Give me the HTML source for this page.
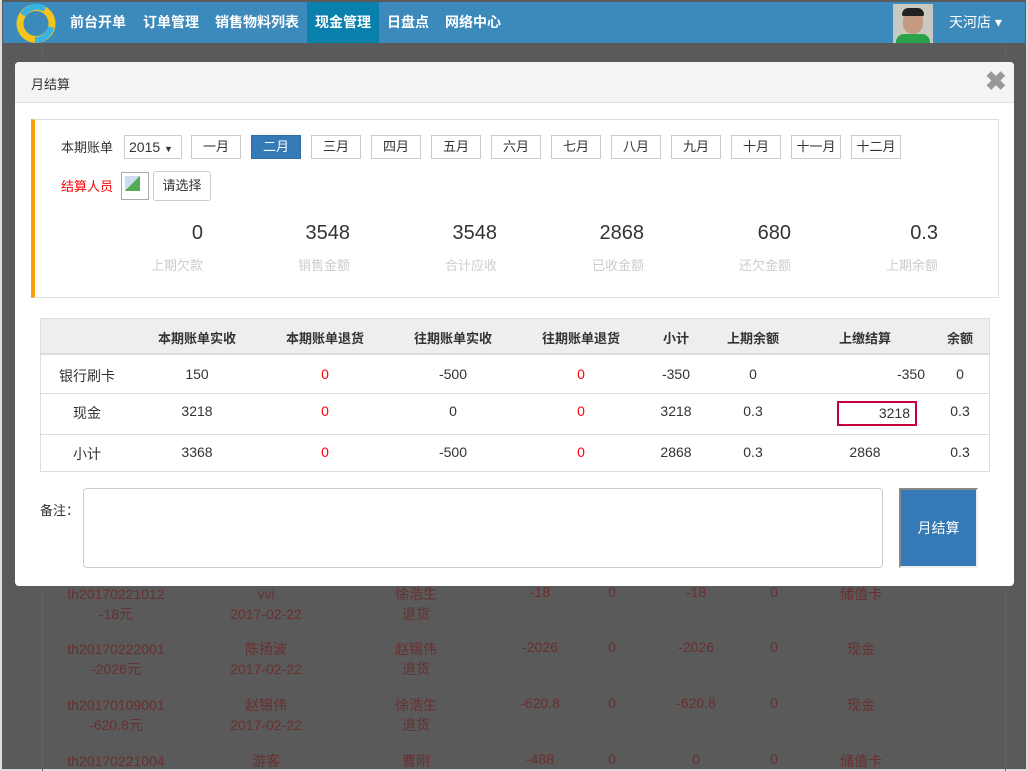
<!DOCTYPE html>
<html><head><meta charset="utf-8"><style>
*{box-sizing:border-box;margin:0;padding:0}
body{width:1028px;height:771px;overflow:hidden;background:#5a5a5a;font-family:"Liberation Sans","Noto Sans CJK SC",sans-serif;font-size:14px;color:#333;position:relative}
.a{position:absolute}
.nav{left:3px;top:2px;width:1022px;height:41px;background:#3c89bb}
.nav span{position:absolute;top:0;height:41px;line-height:40px;color:#fff;font-size:14px;font-weight:bold}
.bgt{color:#6a2f2f;font-size:14px;text-align:center;width:140px;margin-left:-70px}
.modal{left:15px;top:62px;width:999px;height:524px;background:#fff;border-radius:4px;overflow:hidden}
.mh{left:0;top:0;width:999px;height:41px;background:#f4f4f4;border-bottom:1px solid #e0e0e0}
.mb{height:24px;width:50px;border:1px solid #ccc;text-align:center;line-height:22px;font-size:13px;background:#fff}
.num{font-size:20px;color:#333;text-align:right;width:120px}
.lbl{font-size:13px;color:#ccc;text-align:right;width:120px}
.c{text-align:center;width:120px;margin-left:-60px}
.red{color:#f00}
.th{font-weight:bold;font-size:13px}
.hl{height:1px;background:#ddd}
</style></head><body>
<div class="a" style="left:0;top:0;width:1028px;height:771px;border:2px solid #ddd;border-top:none"></div>
<div class="a nav">
<svg class="a" style="left:12px;top:1px" width="42" height="41" viewBox="0 0 42 41"><circle cx="21" cy="20.5" r="16" fill="none" stroke="#f3c51c" stroke-width="7"/><path d="M8 12 A16 16 0 0 1 30 6" stroke="#39b3e6" stroke-width="6" fill="none"/><path d="M36 24 A16 16 0 0 1 20 37" stroke="#39b3e6" stroke-width="6" fill="none"/><circle cx="21" cy="20.5" r="11" fill="#3c89bb"/></svg>
<span style="left:67px">前台开单</span><span style="left:140px">订单管理</span><span style="left:212px">销售物料列表</span>
<span style="left:304px;width:72px;background:#0a80ad;padding-left:8px">现金管理</span>
<span style="left:384px">日盘点</span><span style="left:442px">网络中心</span>
<div class="a" style="left:890px;top:2px;width:40px;height:39px;background:#c9c9c2"><div class="a" style="left:10px;top:6px;width:20px;height:24px;border-radius:10px;background:#c49a80"></div><div class="a" style="left:3px;top:30px;width:34px;height:9px;background:#29a24a;border-radius:8px 8px 0 0"></div><div class="a" style="left:9px;top:4px;width:22px;height:8px;background:#222;border-radius:8px 8px 2px 2px"></div></div>
<span style="left:946px;font-weight:normal">天河店 ▾</span>
</div>
<div class="a" style="left:42px;top:43px;width:964px;height:728px;border-left:1px solid #626262;border-right:1px solid #626262"></div>
<div class="a bgt" style="left:116px;top:584px;line-height:20px">th20170221012<br>-18元</div>
<div class="a bgt" style="left:266px;top:584px;line-height:20px">vvi<br>2017-02-22</div>
<div class="a bgt" style="left:416px;top:584px;line-height:20px">徐浩生<br>退货</div>
<div class="a bgt" style="left:116px;top:639px;line-height:20px">th20170222001<br>-2026元</div>
<div class="a bgt" style="left:266px;top:639px;line-height:20px">陈扬波<br>2017-02-22</div>
<div class="a bgt" style="left:416px;top:639px;line-height:20px">赵锡伟<br>退货</div>
<div class="a bgt" style="left:116px;top:695px;line-height:20px">th20170109001<br>-620.8元</div>
<div class="a bgt" style="left:266px;top:695px;line-height:20px">赵锡伟<br>2017-02-22</div>
<div class="a bgt" style="left:416px;top:695px;line-height:20px">徐浩生<br>退货</div>
<div class="a bgt" style="left:116px;top:751px;line-height:20px">th20170221004</div>
<div class="a bgt" style="left:266px;top:751px;line-height:20px">游客</div>
<div class="a bgt" style="left:416px;top:751px;line-height:20px">曹刚</div>
<div class="a bgt" style="left:540px;top:584px">-18</div><div class="a bgt" style="left:612px;top:584px">0</div><div class="a bgt" style="left:696px;top:584px">-18</div><div class="a bgt" style="left:774px;top:584px">0</div><div class="a bgt" style="left:861px;top:584px">储值卡</div>
<div class="a bgt" style="left:540px;top:639px">-2026</div><div class="a bgt" style="left:612px;top:639px">0</div><div class="a bgt" style="left:696px;top:639px">-2026</div><div class="a bgt" style="left:774px;top:639px">0</div><div class="a bgt" style="left:861px;top:639px">现金</div>
<div class="a bgt" style="left:540px;top:695px">-620.8</div><div class="a bgt" style="left:612px;top:695px">0</div><div class="a bgt" style="left:696px;top:695px">-620.8</div><div class="a bgt" style="left:774px;top:695px">0</div><div class="a bgt" style="left:861px;top:695px">现金</div>
<div class="a bgt" style="left:540px;top:751px">-488</div><div class="a bgt" style="left:612px;top:751px">0</div><div class="a bgt" style="left:696px;top:751px">0</div><div class="a bgt" style="left:774px;top:751px">0</div><div class="a bgt" style="left:861px;top:751px">储值卡</div>

<div class="a modal">
<div class="a mh"><span class="a" style="left:16px;top:12px;font-size:13px">月结算</span><span class="a" style="left:970px;top:4px;font-size:26px;color:#999;font-weight:bold">✖</span></div>
<div class="a" style="left:16px;top:57px;width:968px;height:179px;border:1px solid #ddd;border-left:4px solid #f79d0f"></div>
<span class="a" style="left:46px;top:75px;font-size:13px">本期账单</span>
<div class="a" style="left:109px;top:73px;width:58px;height:24px;border:1px solid #ccc;line-height:22px;padding-left:4px">2015 <span style="font-size:9px">▼</span></div>
<div class="a mb" style="left:176px;top:73px">一月</div>
<div class="a mb" style="left:236px;top:73px;background:#337ab7;color:#fff;border-color:#2e6da4">二月</div>
<div class="a mb" style="left:296px;top:73px">三月</div><div class="a mb" style="left:356px;top:73px">四月</div><div class="a mb" style="left:416px;top:73px">五月</div><div class="a mb" style="left:476px;top:73px">六月</div><div class="a mb" style="left:536px;top:73px">七月</div><div class="a mb" style="left:596px;top:73px">八月</div><div class="a mb" style="left:656px;top:73px">九月</div><div class="a mb" style="left:716px;top:73px">十月</div><div class="a mb" style="left:776px;top:73px">十一月</div><div class="a mb" style="left:836px;top:73px">十二月</div>
<span class="a" style="left:46px;top:114px;font-size:13px;color:#f00">结算人员</span>
<div class="a" style="left:106px;top:110px;width:28px;height:28px;border:1px solid #aaa"><div class="a" style="left:3px;top:3px;width:15px;height:15px;background:linear-gradient(135deg,#cde 50%,#5a5 50%)"></div></div>
<div class="a" style="left:138px;top:109px;width:58px;height:30px;border:1px solid #ccc;border-radius:3px;text-align:center;line-height:28px;font-size:13px">请选择</div>
<div class="a num" style="left:68px;top:160px">0</div><div class="a lbl" style="left:68px;top:193px">上期欠款</div>
<div class="a num" style="left:215px;top:160px">3548</div><div class="a lbl" style="left:215px;top:193px">销售金额</div>
<div class="a num" style="left:362px;top:160px">3548</div><div class="a lbl" style="left:362px;top:193px">合计应收</div>
<div class="a num" style="left:509px;top:160px">2868</div><div class="a lbl" style="left:509px;top:193px">已收金额</div>
<div class="a num" style="left:656px;top:160px">680</div><div class="a lbl" style="left:656px;top:193px">还欠金额</div>
<div class="a num" style="left:803px;top:160px">0.3</div><div class="a lbl" style="left:803px;top:193px">上期余额</div>

<div class="a" style="left:25px;top:256px;width:950px;height:154px;border:1px solid #ddd"></div>
<div class="a" style="left:26px;top:257px;width:948px;height:36px;background:#eee;border-bottom:2px solid #ddd"></div>
<div class="a hl" style="left:26px;top:331px;width:948px"></div><div class="a hl" style="left:26px;top:372px;width:948px"></div>
<div class="a c th" style="left:182px;top:266px">本期账单实收</div><div class="a c th" style="left:310px;top:266px">本期账单退货</div><div class="a c th" style="left:438px;top:266px">往期账单实收</div><div class="a c th" style="left:566px;top:266px">往期账单退货</div><div class="a c th" style="left:661px;top:266px">小计</div><div class="a c th" style="left:738px;top:266px">上期余额</div><div class="a c th" style="left:850px;top:266px">上缴结算</div><div class="a c th" style="left:945px;top:266px">余额</div>
<div class="a c" style="left:72px;top:304px">银行刷卡</div><div class="a c" style="left:182px;top:304px">150</div><div class="a c red" style="left:310px;top:304px">0</div><div class="a c" style="left:438px;top:304px">-500</div><div class="a c red" style="left:566px;top:304px">0</div><div class="a c" style="left:661px;top:304px">-350</div><div class="a c" style="left:738px;top:304px">0</div><div class="a" style="left:850px;top:304px;width:60px;text-align:right">-350</div><div class="a c" style="left:945px;top:304px">0</div>
<div class="a c" style="left:72px;top:341px">现金</div><div class="a c" style="left:182px;top:341px">3218</div><div class="a c red" style="left:310px;top:341px">0</div><div class="a c" style="left:438px;top:341px">0</div><div class="a c red" style="left:566px;top:341px">0</div><div class="a c" style="left:661px;top:341px">3218</div><div class="a c" style="left:738px;top:341px">0.3</div>
<div class="a" style="left:822px;top:339px;width:80px;height:25px;border:2px solid #c4003a;text-align:right;padding-right:5px;line-height:21px">3218</div><div class="a c" style="left:945px;top:341px">0.3</div>
<div class="a c" style="left:72px;top:382px">小计</div><div class="a c" style="left:182px;top:382px">3368</div><div class="a c red" style="left:310px;top:382px">0</div><div class="a c" style="left:438px;top:382px">-500</div><div class="a c red" style="left:566px;top:382px">0</div><div class="a c" style="left:661px;top:382px">2868</div><div class="a c" style="left:738px;top:382px">0.3</div><div class="a c" style="left:850px;top:382px">2868</div><div class="a c" style="left:945px;top:382px">0.3</div>
<span class="a" style="left:25px;top:438px;font-size:13px">备注：</span>
<div class="a" style="left:68px;top:426px;width:800px;height:80px;border:1px solid #ccc;border-radius:4px"></div>
<div class="a" style="left:884px;top:426px;width:79px;height:80px;background:#337ab7;border:2px solid #888;border-right-color:#eee;border-bottom-color:#eee;color:#fff;text-align:center;line-height:76px;font-size:14px">月结算</div>
</div>
</body></html>
